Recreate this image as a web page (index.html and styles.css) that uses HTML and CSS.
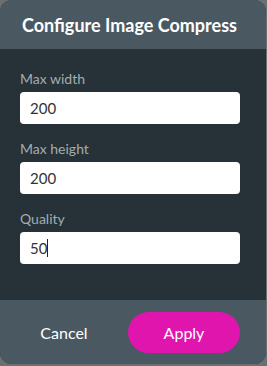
FILE: index.html
```html
<!DOCTYPE html>
<html lang="en">
<head>
  <meta charset="UTF-8" />
  <title>Configure Image Compress</title>
  <link rel="stylesheet" href="styles.css">
</head>
<body>
  <div class="dialog">
    <div class="dialog-header">Configure Image Compress</div>
    <div class="dialog-body">
      <div class="field">
        <div class="field-label">Max width</div>
        <div class="field-input">200</div>
      </div>
      <div class="field">
        <div class="field-label">Max height</div>
        <div class="field-input">200</div>
      </div>
      <div class="field">
        <div class="field-label">Quality</div>
        <div class="field-input">50<span class="caret"></span></div>
      </div>
    </div>
    <div class="dialog-footer">
      <button class="btn-cancel">Cancel</button>
      <button class="btn-apply">Apply</button>
    </div>
  </div>
</body>
</html>
```

FILE: styles.css
```css
body {
  margin: 0;
  background: #6b6f71;
  font-family: Lato, "Open Sans", sans-serif;
  height: 366px;
  overflow: hidden;
}

.dialog {
  width: 266px;
  height: 364px;
  border-radius: 12px;
  overflow: hidden;
  display: flex;
  flex-direction: column;
  background: #263238;
}

.dialog-header {
  height: 49px;
  padding-right: 7px;
  background: #4a5961;
  color: #fff;
  font-size: 18px;
  font-weight: bold;
  display: flex;
  align-items: center;
  justify-content: center;
}

.dialog-body {
  flex: 1;
  padding: 21px 26px 0 20px;
  display: flex;
  flex-direction: column;
  gap: 16px;
}

.field-label {
  color: #a4acaf;
  font-size: 14px;
  line-height: 18px;
  margin-bottom: 4px;
}

.field-input {
  height: 32px;
  background: #fff;
  border-radius: 4px;
  padding: 0 10px;
  display: flex;
  align-items: center;
  color: #333;
  font-size: 15px;
}

.caret {
  display: inline-block;
  width: 1px;
  height: 18px;
  background: #222;
}

.dialog-footer {
  height: 64px;
  background: #4a5961;
  display: flex;
  align-items: center;
  justify-content: space-between;
  padding: 0 26px 0 14px;
}

.dialog-footer button {
  font-family: inherit;
  font-size: 16px;
  border: none;
  cursor: pointer;
}

.btn-cancel {
  background: none;
  color: #fff;
  width: 100px;
}

.btn-apply {
  background: #e015ad;
  color: #fff;
  width: 112px;
  height: 41px;
  border-radius: 21px;
}
```
